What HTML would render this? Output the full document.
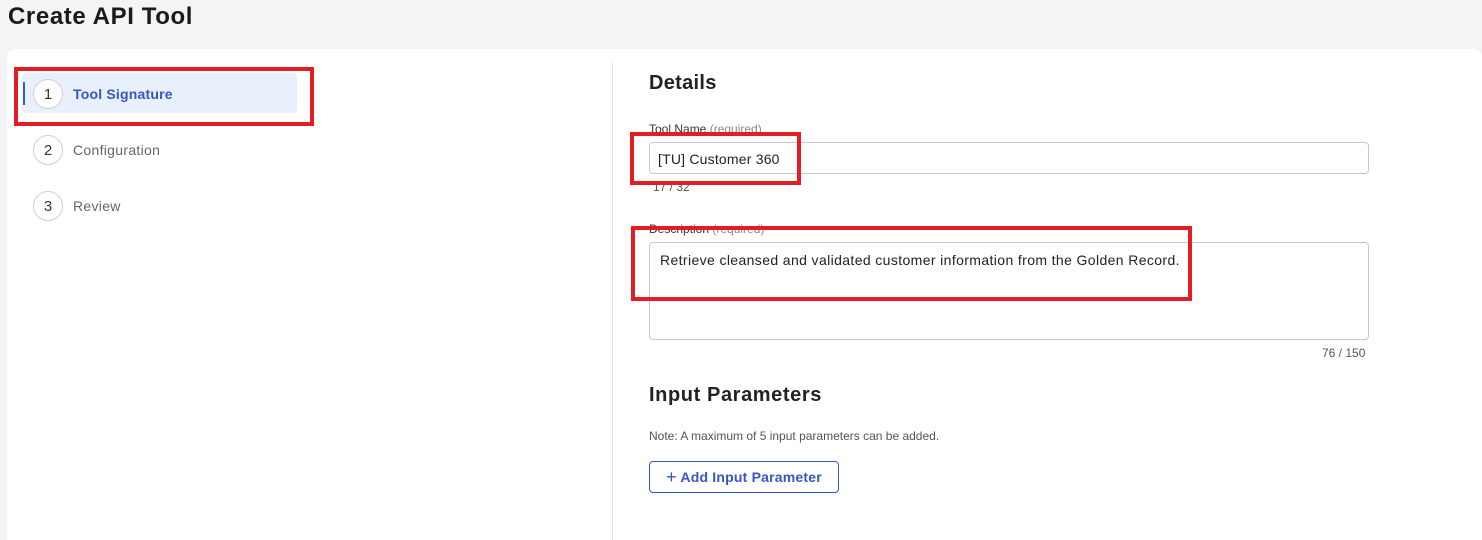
<!DOCTYPE html>
<html style="height:540px;overflow:hidden"><head><style>
body{margin:0;width:1482px;height:540px;background:#f4f4f4;font-family:"Liberation Sans",sans-serif;position:relative;overflow:hidden;color:#1f1f1f}
.a{position:absolute}
h1{position:absolute;left:8px;top:3px;margin:0;font-size:24px;font-weight:bold;color:#1a1a1a;letter-spacing:0.6px}
.card{left:7px;top:49px;width:1475px;height:491px;background:#fff;border-radius:8px 8px 0 0}
.circ{width:30px;height:30px;border:1px solid #cfcfcf;border-radius:50%;box-sizing:border-box;display:flex;align-items:center;justify-content:center;font-size:15px;color:#333;background:#fff}
.lbl{font-size:14px;color:#666;letter-spacing:0.3px}
.red{border:4px solid #e21d24;box-sizing:border-box}
.inp{border:1px solid #c8c8c8;border-radius:4px;box-sizing:border-box;background:#fff}
.small{font-size:12px;color:#555}
</style></head><body>
<h1>Create API Tool</h1>
<div class="a card"></div>
<div class="a" style="left:22px;top:73px;width:275px;height:40px;background:#e7f0fb;border-radius:4px"></div>
<div class="a" style="left:23px;top:82px;width:2px;height:23px;background:#2f5fc9"></div>
<div class="a circ" style="left:33px;top:79px">1</div>
<div class="a" style="left:73px;top:86px;font-size:14px;color:#3557c4;font-weight:bold;letter-spacing:0.2px">Tool Signature</div>
<div class="a circ" style="left:33px;top:135px">2</div>
<div class="a lbl" style="left:73px;top:142px">Configuration</div>
<div class="a circ" style="left:33px;top:191px">3</div>
<div class="a lbl" style="left:73px;top:198px">Review</div>
<div class="a" style="left:612px;top:62px;width:1px;height:478px;background:#e2e2e2"></div>
<div class="a" style="left:649px;top:72px;font-size:20px;font-weight:bold;color:#222;letter-spacing:0.3px">Details</div>
<div class="a small" style="left:649px;top:122px"><span style="color:#333">Tool Name</span> <span style="color:#888">(required)</span></div>
<div class="a inp" style="left:649px;top:142px;width:720px;height:32px"></div>
<div class="a" style="left:658px;top:151px;font-size:14px;color:#222;letter-spacing:0.2px">[TU] Customer 360</div>
<div class="a small" style="left:653px;top:180px">17 / 32</div>
<div class="a small" style="left:649px;top:222px"><span style="color:#333">Description</span> <span style="color:#888">(required)</span></div>
<div class="a inp" style="left:649px;top:242px;width:720px;height:98px"></div>
<div class="a" style="left:660px;top:252px;font-size:14px;color:#222;letter-spacing:0.38px">Retrieve cleansed and validated customer information from the Golden Record.</div>
<div class="a small" style="left:1322px;top:346px">76 / 150</div>
<div class="a" style="left:649px;top:384px;font-size:20px;font-weight:bold;color:#222;letter-spacing:0.6px">Input Parameters</div>
<div class="a small" style="left:649px;top:429px">Note: A maximum of 5 input parameters can be added.</div>
<div class="a" style="left:649px;top:461px;width:190px;height:32px;border:1px solid #3557c4;border-radius:4px;box-sizing:border-box;color:#3557c4;font-size:14px;font-weight:bold;line-height:30px;text-align:center;letter-spacing:0.2px"><span style="font-weight:normal;font-size:18px;vertical-align:-1px">+</span> Add Input Parameter</div>
<div class="a red" style="left:14px;top:67px;width:300px;height:59px"></div>
<div class="a red" style="left:630px;top:132px;width:171px;height:53px"></div>
<div class="a red" style="left:631px;top:226px;width:561px;height:75px"></div>
</body></html>
